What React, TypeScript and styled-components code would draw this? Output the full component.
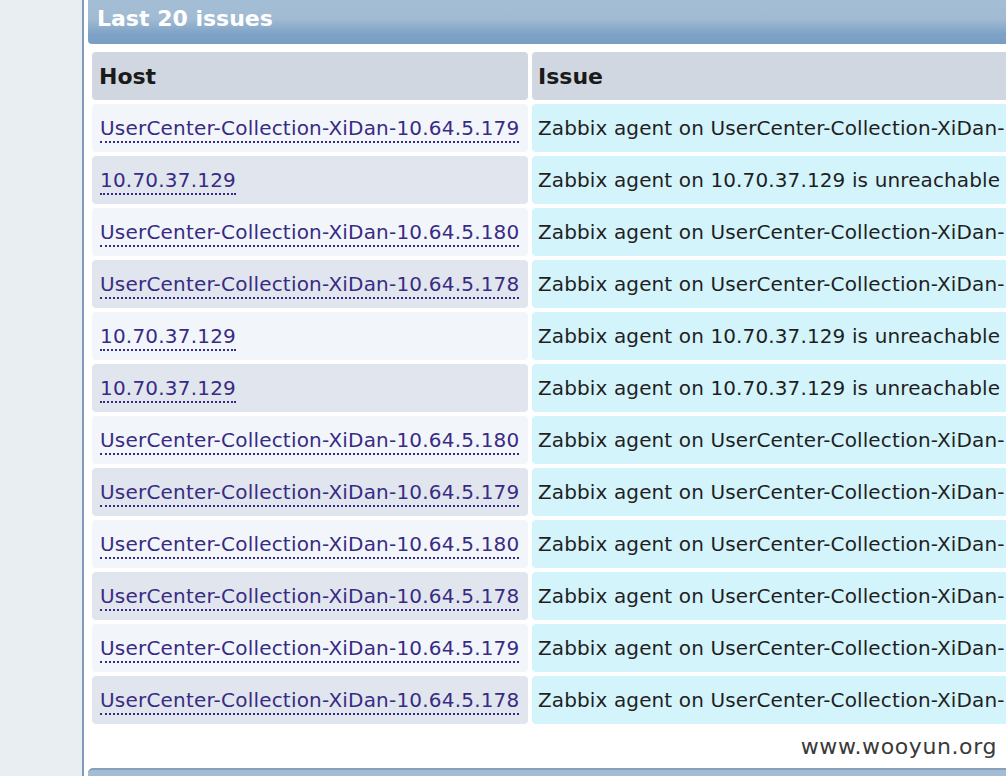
import styled, { createGlobalStyle } from "styled-components";

const GlobalStyle = createGlobalStyle`
  html, body {
    margin: 0;
    padding: 0;
    background: #ffffff;
    overflow: hidden;
  }
  body {
    font-family: "DejaVu Sans", Verdana, sans-serif;
  }
`;

const Page = styled.div`
  position: relative;
  display: flex;
  width: 100vw;
  height: 776px;
  overflow: hidden;
`;

const Sidebar = styled.div`
  flex: 0 0 82px;
  background-color: #e9eef2;
  border-right: 2px solid #7f9bb7;
`;

const Main = styled.div`
  flex: 1;
  min-width: 0;
  padding-left: 4px;
  overflow: hidden;
`;

const Panel = styled.div`
  width: 1400px;
`;

const PanelHeader = styled.div`
  height: 44px;
  box-sizing: border-box;
  padding: 0 9px 7px;
  display: flex;
  align-items: center;
  border-bottom-left-radius: 4px;
  background: linear-gradient(
    to bottom,
    #a4bed6 0%,
    #a1bbd3 42%,
    #7da2c6 78%,
    #779ec3 100%
  );
  color: #ffffff;
  font-size: 22px;
  font-weight: 700;
`;

const Table = styled.table`
  margin-top: 4px;
  border-collapse: separate;
  border-spacing: 4px;
  width: 100%;
`;

interface HeadProps {
  $pad: number;
}

const HeadCell = styled.th<HeadProps>`
  height: 48px;
  box-sizing: border-box;
  padding: 0 ${(props) => props.$pad}px;
  text-align: left;
  background-color: #d0d7e0;
  border-radius: 4px;
  color: #1a1a1a;
  font-size: 22px;
  font-weight: 700;
`;

interface CellProps {
  $tone: "light" | "dark" | "issue";
}

const tones = {
  light: "#f2f6fa",
  dark: "#e1e5ed",
  issue: "#d4f4fc",
};

const Cell = styled.td<CellProps>`
  height: 48px;
  box-sizing: border-box;
  padding: 0 6px;
  background-color: ${(props) => tones[props.$tone]};
  border-radius: 4px;
  color: #1f1f1f;
  font-size: 20px;
  letter-spacing: 0.12px;
  white-space: nowrap;
  vertical-align: middle;
`;

const HostCell = styled(Cell)`
  width: 436px;
  padding: 0 8px;
  letter-spacing: 0.2px;
`;

const HostLink = styled.a`
  color: #382b84;
  text-decoration: none;
  border-bottom: 2px dotted #382b84;
  padding-bottom: 1px;
`;

const Footer = styled.div`
  height: 40px;
`;

const NextPanel = styled.div`
  width: 1400px;
  height: 8px;
  border-top: 2px solid #86a1bc;
  border-top-left-radius: 5px;
  background-color: #a3bcd4;
`;

const Watermark = styled.div`
  position: absolute;
  right: 9px;
  top: 734px;
  color: #3a3a3a;
  font-size: 22px;
  letter-spacing: 0.6px;
`;

const hosts = [
  "UserCenter-Collection-XiDan-10.64.5.179",
  "10.70.37.129",
  "UserCenter-Collection-XiDan-10.64.5.180",
  "UserCenter-Collection-XiDan-10.64.5.178",
  "10.70.37.129",
  "10.70.37.129",
  "UserCenter-Collection-XiDan-10.64.5.180",
  "UserCenter-Collection-XiDan-10.64.5.179",
  "UserCenter-Collection-XiDan-10.64.5.180",
  "UserCenter-Collection-XiDan-10.64.5.178",
  "UserCenter-Collection-XiDan-10.64.5.179",
  "UserCenter-Collection-XiDan-10.64.5.178",
];

const App = () => {
  return (
    <>
      <GlobalStyle />
      <Page>
        <Sidebar />
        <Main>
          <Panel>
            <PanelHeader>Last 20 issues</PanelHeader>
            <Table>
              <thead>
                <tr>
                  <HeadCell $pad={7}>Host</HeadCell>
                  <HeadCell $pad={6}>Issue</HeadCell>
                </tr>
              </thead>
              <tbody>
                {hosts.map((host, i) => (
                  <tr key={i}>
                    <HostCell $tone={i % 2 === 0 ? "light" : "dark"}>
                      <HostLink href="#">{host}</HostLink>
                    </HostCell>
                    <Cell $tone="issue">
                      Zabbix agent on {host} is unreachable for 5 minutes
                    </Cell>
                  </tr>
                ))}
              </tbody>
            </Table>
            <Footer />
          </Panel>
          <NextPanel />
        </Main>
        <Watermark>www.wooyun.org</Watermark>
      </Page>
    </>
  );
};

export default App;
